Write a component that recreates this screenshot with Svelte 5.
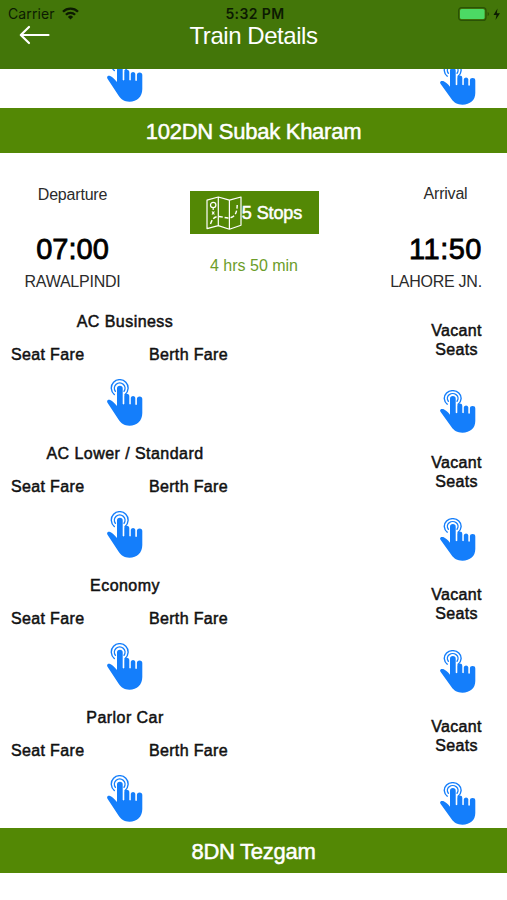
<script lang="ts">
  type FareClass = { name: string; first?: boolean };

  const classes: FareClass[] = [
    { name: 'AC Business', first: true },
    { name: 'AC Lower / Standard' },
    { name: 'Economy' },
    { name: 'Parlor Car' }
  ];
</script>

{#snippet hand()}
  <svg class="hand" viewBox="0 0 36 47" preserveAspectRatio="none" aria-hidden="true">
    <g fill="none" stroke="#147efb" stroke-linecap="round">
      <path d="M7.3 15.5A8.4 8.4 0 1 1 18.1 15.5" stroke-width="1.4" />
      <path d="M8.4 12.3A5.3 5.3 0 1 1 17 12.3" stroke-width="1.4" />
    </g>
    <path
      fill="#147efb"
      d="M10 27V9.5a2.8 2.8 0 0 1 5.7 0V25q.8.8 1.6 0v-7.700a2.500 2.500 0 0 1 5 0V25q.8.8 1.500 0v-6.200a2.300 2.300 0 0 1 4.500 0V25.500q.8.8 1.600 0v-5.400a2.700 2.700 0 0 1 5.400 0V34C35.300 42 30 46.700 22.500 46.700C17 46.700 14 44 12 41.300L.5 23.700C-.7 21.500 1 20.100 3.200 20.900C5.600 21.900 8 24.300 10 27Z"
    />
  </svg>
{/snippet}

<div class="screen">
  <header class="header">
    <div class="status">
      <div class="status__left">
        <span class="status__carrier">Carrier</span>
        <svg width="17" height="13" viewBox="0 0 17 13" aria-hidden="true">
          <g fill="none" stroke="#0c1b02" stroke-width="2.3">
            <path d="M1 4.7a10.6 10.6 0 0 1 15 0" />
            <path d="M3.9 7.7a6.5 6.5 0 0 1 9.2 0" />
          </g>
          <path d="M5.9 9.9a3.7 3.7 0 0 1 5.2 0L8.5 12.6Z" fill="#0c1b02" />
        </svg>
      </div>
      <span class="status__time">5:32 PM</span>
      <svg class="status__battery" width="44" height="14" viewBox="0 0 44 14" aria-hidden="true">
        <rect x=".6" y=".6" width="27.4" height="12.8" rx="3" fill="none" stroke="#2a5206" stroke-width="1.2" />
        <rect x="2" y="2" width="24.6" height="10" rx="1.6" fill="#4cd964" />
        <path d="M29.6 5v4q1.5-.6 1.5-2t-1.5-2z" fill="#2a5206" />
        <path d="M39.5 1.5L35.5 8h3l-1 5 4.5-6.8h-3.2z" fill="#0c1b02" />
      </svg>
    </div>
    <div class="nav">
      <button class="nav__back" aria-label="Back">
        <svg width="31" height="20" viewBox="0 0 31 20" aria-hidden="true">
          <path d="M29.5 10H2M10 2L1.8 10 10 18" fill="none" stroke="#fff" stroke-width="2.2" stroke-linecap="round" stroke-linejoin="round" />
        </svg>
      </button>
      <h1 class="nav__title">Train Details</h1>
    </div>
  </header>

  <main class="list">
    <!-- Last row of the train above, scrolled under the header -->
    <div class="scrolled">
      <div class="scrolled__main">
        <button class="tap" aria-label="Show fare">{@render hand()}</button>
      </div>
      <div class="scrolled__seats">
        <button class="tap tap--short" aria-label="Show seats">{@render hand()}</button>
      </div>
    </div>

    <h2 class="band">102DN Subak Kharam</h2>

    <section class="trip">
      <div class="trip__end trip__end--from">
        <div class="trip__label">Departure</div>
        <div class="trip__time">07:00</div>
        <div class="trip__station">RAWALPINDI</div>
      </div>
      <div class="trip__middle">
        <button class="stops">
          <svg width="36" height="34" viewBox="0 0 36 34" fill="none" stroke="#fff" stroke-width="1.2" stroke-linejoin="round" aria-hidden="true">
            <path d="M1 4.2L12.3 1 23.4 4.2 35 1V29.3L23.4 33.2 12.3 29.6 1 32.7ZM12.3 1V29.6M23.4 4.2V33.2" />
            <circle cx="7.2" cy="9" r="2.7" />
            <path d="M7.2 11.8v2.2M6 15.5l2.4 3M8.4 15.5l-2.4 3" />
            <path d="M4.5 28C6 24 7.5 20.5 12.5 20.5S20 23 25 21.5 31 15 31.2 9" stroke-dasharray="4 2" stroke-width="1.4" />
          </svg>
          <span>5 Stops</span>
        </button>
        <div class="trip__duration">4 hrs 50 min</div>
      </div>
      <div class="trip__end trip__end--to">
        <div class="trip__label">Arrival</div>
        <div class="trip__time">11:50</div>
        <div class="trip__station">LAHORE JN.</div>
      </div>
    </section>

    {#each classes as item}
      <div class="fare">
        <div class="fare__main">
          <div class="fare__name">{item.name}</div>
          <div class="fare__labels">
            <span>Seat Fare</span>
            <span>Berth Fare</span>
          </div>
          <button class="tap" aria-label="Show fare">{@render hand()}</button>
        </div>
        <div class="fare__seats" class:fare__seats--first={item.first}>
          <div class="fare__vacant">Vacant<br />Seats</div>
          <button class="tap tap--short" aria-label="Show seats">{@render hand()}</button>
        </div>
      </div>
    {/each}

    <h2 class="band">8DN Tezgam</h2>
  </main>
</div>

<style>
  :global(body) {
    background: #fff;
  }

  .screen {
    width: 507px;
    height: 900px;
    display: flex;
    flex-direction: column;
    overflow: hidden;
    font-family: 'Liberation Sans', Arial, sans-serif;
    color: #111;
  }

  button {
    border: 0;
    padding: 0;
    background: none;
    font: inherit;
    color: inherit;
    display: flex;
  }

  h1,
  h2 {
    margin: 0;
    font-weight: 400;
  }

  /* Header */
  .header {
    height: 69px;
    flex-shrink: 0;
    background: #437609;
  }

  .status {
    height: 24px;
    padding: 3px 5px 0 8px;
    box-sizing: border-box;
    display: grid;
    grid-template-columns: 1fr auto 1fr;
    align-items: center;
    color: #0c1b02;
    font-family: Inter, 'Liberation Sans', sans-serif;
    font-size: 14px;
  }

  .status__left {
    display: flex;
    align-items: center;
    gap: 7px;
  }

  .status__carrier {
    letter-spacing: 0.1px;
  }

  .status__time {
    font-weight: 600;
    letter-spacing: 0.4px;
  }

  .status__battery {
    justify-self: end;
  }

  .nav {
    display: grid;
    grid-template-columns: 100px 1fr 100px;
    align-items: start;
    text-align: center;
  }

  .nav__back {
    padding: 1px 0 0 19px;
  }

  .nav__title {
    margin-top: -2px;
    color: #fff;
    font-size: 24px;
    line-height: 28px;
    letter-spacing: -0.45px;
  }

  /* Train list */
  .list {
    flex: 1;
    min-height: 0;
  }

  .scrolled {
    height: 39px;
    display: flex;
    align-items: flex-end;
    justify-content: space-between;
    overflow: hidden;
  }

  .scrolled__main {
    width: 250px;
    display: flex;
    justify-content: center;
    padding-bottom: 6px;
  }

  .scrolled__seats {
    width: 98px;
    display: flex;
    justify-content: center;
    padding-bottom: 3px;
  }

  .band {
    height: 45px;
    display: flex;
    align-items: center;
    justify-content: center;
    padding-top: 2px;
    box-sizing: border-box;
    background: #538805;
    color: #fff;
    font-size: 22px;
    letter-spacing: -0.26px;
    -webkit-text-stroke: 0.5px #fff;
  }

  /* Departure, stops and arrival */
  .trip {
    height: 147px;
    display: grid;
    grid-template-columns: 145px 1fr 123px;
    text-align: center;
  }

  .trip__end {
    padding-top: 32px;
    color: #2b2b2b;
  }

  .trip__end--to {
    padding-top: 31px;
  }

  .trip__label {
    height: 20px;
    line-height: 20px;
    font-size: 16px;
    letter-spacing: -0.2px;
  }

  .trip__time {
    margin-top: 26px;
    height: 36px;
    line-height: 36px;
    color: #000;
    font-size: 29px;
    -webkit-text-stroke: 0.8px #000;
  }

  .trip__end--to .trip__time {
    margin-top: 27px;
    letter-spacing: 0.5px;
  }

  .trip__station {
    margin-top: 5px;
    height: 20px;
    line-height: 20px;
    font-size: 16px;
    letter-spacing: -0.25px;
  }

  .trip__end--to .trip__station {
    margin-right: 19px;
  }

  .trip__middle {
    display: flex;
    flex-direction: column;
    align-items: center;
    padding-top: 38px;
    margin-right: 21px;
  }

  .stops {
    width: 129px;
    height: 43px;
    align-items: center;
    justify-content: center;
    background: #538805;
    color: #fff;
    font-size: 18px;
    letter-spacing: -0.1px;
    -webkit-text-stroke: 0.5px #fff;
  }

  .stops span {
    padding-top: 2px;
  }

  .trip__duration {
    margin-top: 22px;
    line-height: 20px;
    color: #6c9d2a;
    font-size: 16px;
  }

  /* Fare classes */
  .fare {
    height: 132px;
    display: flex;
    justify-content: space-between;
    font-size: 16px;
    letter-spacing: 0.35px;
    -webkit-text-stroke: 0.5px #111;
  }

  .fare__main {
    width: 250px;
    padding-top: 12px;
    display: flex;
    flex-direction: column;
    align-items: center;
    line-height: 20px;
  }

  .fare__name {
    letter-spacing: 0.45px;
  }

  .fare__labels {
    align-self: stretch;
    display: flex;
    justify-content: space-between;
    padding: 0 22px 0 11px;
    margin: 13px 0 14px;
  }

  .fare__seats {
    width: 98px;
    padding: 21px 3px 0 0;
    display: flex;
    flex-direction: column;
    align-items: center;
    line-height: 19px;
    text-align: center;
    box-sizing: border-box;
  }

  .tap {
    width: 36px;
    height: 47px;
    flex-shrink: 0;
  }

  .tap--short {
    height: 43px;
  }

  .fare__seats .tap--short {
    margin: 27px 0 0 3px;
  }

  .fare__seats--first .tap--short {
    margin-top: 31px;
  }

  .hand {
    width: 100%;
    height: 100%;
  }
</style>
